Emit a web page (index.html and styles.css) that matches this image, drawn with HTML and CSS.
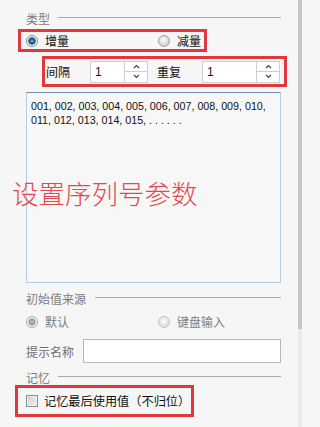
FILE: index.html
```html
<!DOCTYPE html>
<html lang="zh">
<head>
<meta charset="utf-8">
<title>序列号参数</title>
<link rel="stylesheet" href="styles.css">
</head>
<body>
<div class="page">
  <div class="main">
    <div class="hdr"><span class="hdr-label">类型</span><span class="hdr-line"></span></div>
    <div class="redbox box-type">
      <span class="opt opt-first"><span class="radio on"></span>增量</span>
      <span class="opt"><span class="radio"></span>减量</span>
    </div>
    <div class="redbox box-spin">
      <span class="lbl lbl-a">间隔</span>
      <div class="spin spin-a">
        <span class="val">1</span>
        <div class="btns">
          <span class="btn"><svg width="7" height="5" viewBox="0 0 7 5"><polyline points="1,4 3.5,1.5 6,4" fill="none" stroke="#444" stroke-width="1.2"/></svg></span>
          <span class="btn"><svg width="7" height="5" viewBox="0 0 7 5"><polyline points="1,1 3.5,3.5 6,1" fill="none" stroke="#444" stroke-width="1.2"/></svg></span>
        </div>
      </div>
      <span class="lbl lbl-b">重复</span>
      <div class="spin spin-b">
        <span class="val">1</span>
        <div class="btns">
          <span class="btn"><svg width="7" height="5" viewBox="0 0 7 5"><polyline points="1,4 3.5,1.5 6,4" fill="none" stroke="#444" stroke-width="1.2"/></svg></span>
          <span class="btn"><svg width="7" height="5" viewBox="0 0 7 5"><polyline points="1,1 3.5,3.5 6,1" fill="none" stroke="#444" stroke-width="1.2"/></svg></span>
        </div>
      </div>
    </div>
    <div class="preview">
      <div class="seq">001, 002, 003, 004, 005, 006, 007, 008, 009, 010,<br>011, 012, 013, 014, 015, . . . . . .</div>
      <div class="overlay">设置序列号参数</div>
    </div>
    <div class="hdr hdr-2"><span class="hdr-label">初始值来源</span><span class="hdr-line"></span></div>
    <div class="opt-row">
      <span class="opt opt-first dis"><span class="radio on-dis"></span>默认</span>
      <span class="opt dis"><span class="radio off-dis"></span>键盘输入</span>
    </div>
    <div class="name-row">
      <span class="name-lbl">提示名称</span>
      <span class="name-input"></span>
    </div>
    <div class="hdr hdr-3"><span class="hdr-label">记忆</span><span class="hdr-line"></span></div>
    <div class="redbox box-mem">
      <span class="check"></span>
      <span class="check-text">记忆最后使用值（不归位）</span>
    </div>
  </div>
  <div class="scroll"><div class="thumb"></div></div>
</div>
</body>
</html>
```
FILE: styles.css
```css
* { box-sizing: border-box; }
html, body { margin: 0; padding: 0; }
body {
  background: #f6f6f6;
  font-family: "Noto Sans CJK SC", "Liberation Sans", sans-serif;
  font-size: 12px;
  color: #111;
  width: 305px;
  height: 427px;
  overflow: hidden;
}
.page { display: flex; height: 427px; }
.main {
  width: 298px;
  padding: 12px 17px 0 26px;
}
.scroll {
  width: 4px;
  height: 427px;
  background: #ececec;
  display: flex;
  flex-direction: column;
}
.thumb { height: 329px; background: #c6c6c6; }

.hdr { display: flex; height: 14px; line-height: 14px; }
.hdr-label { color: #7c7c7c; }
.hdr-line { flex: 1; height: 1px; background: #a9a9a9; margin: 5px 0 0 8px; }
.hdr-2 { margin-top: 9px; }
.hdr-2 .hdr-line { margin-left: 9px; }
.hdr-3 { margin-top: 8px; }

.redbox { border: 3px solid #e0393d; display: flex; align-items: center; }
.box-type { margin: 3px 0 0 -8px; width: 189px; height: 23px; padding-left: 5px; }
.opt { display: flex; align-items: center; line-height: 14px; }
.opt-first { width: 132px; }
.radio {
  width: 12px; height: 12px; border-radius: 50%;
  border: 1px solid #a4a4a4;
  background: radial-gradient(circle at 45% 40%, #ffffff 0, #e6e6e6 3px, #cfcfcf 6px);
  margin-right: 7px;
  flex: none;
}
.radio.on {
  border-color: #8a8a8a;
  background: radial-gradient(circle at 50% 50%, #6fb4e2 0, #2b78b0 1.6px, #14466e 3.4px, #e9e9e9 3.9px, #f6f6f6 5px);
}
.radio.on-dis {
  border-color: #adadad;
  background: radial-gradient(circle at 50% 50%, #c0c0c0 0, #959595 3.2px, #e8e8e8 3.8px, #f3f3f3 5px);
}
.radio.off-dis {
  border-color: #c4c4c4;
  background: radial-gradient(circle at 45% 40%, #ffffff 0, #ececec 3px, #dcdcdc 6px);
}
.dis { color: #808080; }

.box-spin { margin: 4px 0 0 16px; width: 245px; height: 31px; padding-left: 1px; }
.lbl { line-height: 14px; }
.lbl-a { margin-right: 20px; }
.lbl-b { margin: 0 21px 0 9px; }
.spin {
  height: 22px;
  border: 1px solid #cdcdcd;
  background: #fff;
  display: flex;
}
.spin-a { width: 58px; }
.spin-b { width: 78px; }
.val {
  flex: 1;
  font-family: "Liberation Sans", sans-serif;
  font-size: 12px;
  line-height: 20px;
  padding-left: 4px;
}
.btns { width: 23px; border-left: 1px solid #cdcdcd; display: flex; flex-direction: column; }
.btn { flex: 1; display: flex; align-items: center; justify-content: center; }
.btn + .btn { border-top: 1px solid #cdcdcd; }

.preview {
  position: relative;
  margin-top: 5px;
  height: 191px;
  border: 1px solid #b7cde1;
  border-top-color: #6f8fae;
  background: #f7f7f7;
  padding: 6px 0 0 4px;
}
.seq {
  font-family: "Liberation Sans", sans-serif;
  font-size: 10.7px;
  line-height: 14px;
  color: #111;
}
.overlay {
  position: absolute;
  left: -15px;
  top: 85px;
  font-size: 26.5px;
  font-weight: 300;
  line-height: 30px;
  color: #e5484c;
  white-space: nowrap;
}

.opt-row { display: flex; align-items: center; height: 20px; margin-top: 6px; }
.name-row { display: flex; align-items: center; height: 24px; margin-top: 7px; }
.name-lbl { color: #6f6f6f; width: 57px; }
.name-input { flex: 1; height: 24px; background: #fff; border: 1px solid #b8b8b8; }

.box-mem { margin: 0 0 0 -11px; width: 179px; height: 32px; padding-left: 8px; }
.check {
  width: 12px; height: 12px; flex: none;
  border: 1px solid #8e8e8e;
  background: linear-gradient(135deg, #cfcfcf, #f4f4f4);
  box-shadow: inset 0 0 0 1px #efefef;
  margin-right: 6px;
}
.check-text { line-height: 14px; font-size: 12.2px; }
```
